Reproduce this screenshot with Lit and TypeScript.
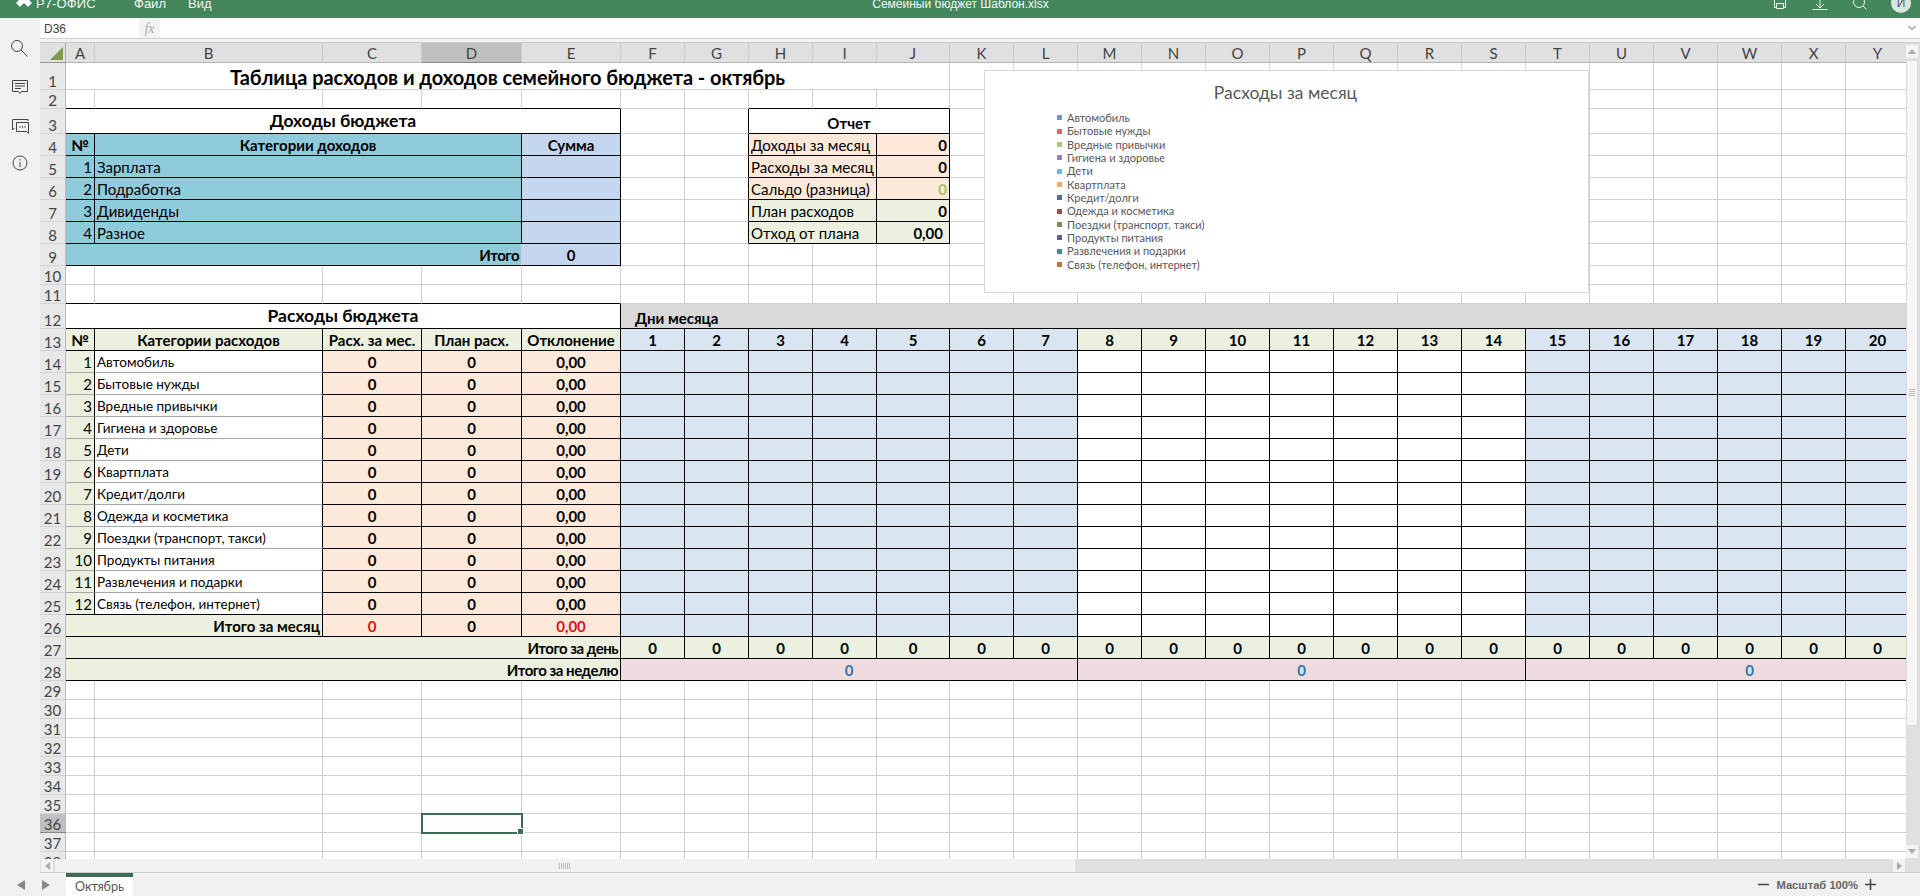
import { LitElement, html, css, svg } from 'lit';
import { customElement } from 'lit/decorators.js';

interface Cell {
  t: string;
  cls: string;
  span: number;
}

const c = (t: string, cls = '', span = 1): Cell => ({ t, cls, span });
const blank = (n: number, cls = ''): Cell[] => Array.from({ length: n }, () => c('', cls));

const LETTERS = 'ABCDEFGHIJKLMNOPQRSTUVWXYZ'.split('');

const INCOME = ['Зарплата', 'Подработка', 'Дивиденды', 'Разное'];
const CATEGORIES = [
  'Автомобиль',
  'Бытовые нужды',
  'Вредные привычки',
  'Гигиена и здоровье',
  'Дети',
  'Квартплата',
  'Кредит/долги',
  'Одежда и косметика',
  'Поездки (транспорт, такси)',
  'Продукты питания',
  'Развлечения и подарки',
  'Связь (телефон, интернет)',
];
const LEGEND = ['#4f81bd', '#c0504d', '#9bbb59', '#8064a2', '#4bacc6', '#f79646', '#2c4d75', '#772c2a', '#5f7530', '#4d3b62', '#276a7c', '#b65708'];

const report = (label: string, value: string, bg: string, extra = ''): Cell[] => [
  c(''),
  c('', 'kr'),
  c(label, `${bg} kr kb lg`, 2),
  c(value, `${bg} kr kb right b lg ${extra}`),
  ...blank(16),
];

const days = (fn: (d: number) => string): Cell[] =>
  Array.from({ length: 21 }, (_, i) => c('', `${fn(i + 1)} kr kb`));

const weekBg = (d: number) => (d <= 7 || d > 14 ? 'blue' : '');

function buildRows(): Cell[][] {
  const rows: Cell[][] = [];
  rows.push([c('Таблица расходов и доходов семейного бюджета - октябрь', 'title center', 10), ...blank(16)]);
  rows.push([...blank(5, 'kb'), ...blank(2), ...blank(3, 'kb'), ...blank(16)]);
  rows.push([
    c('Доходы бюджета', 'h2 center kr kb', 5),
    c(''),
    c('', 'kr'),
    c('Отчет', 'b lg center kr kb', 3),
    ...blank(16),
  ]);
  rows.push([
    c('№', 'sea b lg center kr kb'),
    c('Категории доходов', 'sea b lg center kr kb', 3),
    c('Сумма', 'sky b lg center kr kb'),
    ...report('Доходы за месяц', '0', 'peach'),
  ]);
  INCOME.forEach((name, i) => {
    const rep = [
      report('Расходы за месяц', '0', 'peach'),
      report('Сальдо (разница)', '0', 'peach', 'lime'),
      report('План расходов', '0', 'green'),
      report('Отход от плана', '0,00', 'green', 'pr'),
    ][i];
    rows.push([
      c(String(i + 1), 'sea lg right kr kb'),
      c(name, 'sea lg kr kb', 3),
      c('', 'sky kr kb'),
      ...rep,
    ]);
  });
  rows.push([c('Итого', 'sea b tight right kb', 4), c('0', 'sky b lg center kr kb'), ...blank(21)]);
  rows.push(blank(26));
  rows.push([...blank(5, 'kb'), ...blank(21)]);
  rows.push([c('Расходы бюджета', 'h2 center kr kb', 5), c('Дни месяца', 'band kb', 21)]);
  rows.push([
    c('№', 'green b lg center kr kb'),
    c('Категории расходов', 'green b center kr kb'),
    c('Расх. за мес.', 'green b center kr kb'),
    c('План расх.', 'green b center kr kb'),
    c('Отклонение', 'green b center kr kb'),
    ...Array.from({ length: 21 }, (_, i) => c(String(i + 1), `${i >= 7 && i < 14 ? 'green' : 'blue'} b center kr kb`)),
  ]);
  CATEGORIES.forEach((name, i) => {
    const last = i === CATEGORIES.length - 1;
    const line = last ? 'kb' : 'mb';
    rows.push([
      c(String(i + 1), `green lg right kr ${line}`),
      c(name, `name kr ${line}`),
      c('0', 'peach b center kr kb'),
      c('0', 'peach b center kr kb'),
      c('0,00', 'peach b center kr kb'),
      ...days(weekBg),
    ]);
  });
  rows.push([
    c('Итого за месяц', 'green b right kr kb', 2),
    c('0', 'peach b center red kr kb'),
    c('0', 'peach b center kr kb'),
    c('0,00', 'peach b center red kr kb'),
    ...days(weekBg),
  ]);
  rows.push([
    c('Итого за день', 'green b right tight kr kb', 5),
    ...Array.from({ length: 21 }, () => c('0', 'green b center kr kb')),
  ]);
  rows.push([
    c('Итого за неделю', 'green b right tight kr kb', 5),
    c('0', 'pink b center link kr kb', 7),
    c('0', 'pink b center link kr kb', 7),
    c('0', 'pink b center link kr kb', 7),
  ]);
  for (let r = 29; r <= 38; r++) {
    if (r === 36) {
      rows.push([...blank(3), c('', 'sel'), ...blank(22)]);
    } else {
      rows.push(blank(26));
    }
  }
  return rows;
}

const ROWS = buildRows();

const iconSearch = svg`<circle cx="9" cy="9" r="5.5"/><path d="M13 13l6.5 6.5"/>`;
const iconComment = svg`<path d="M4.5 5.5h15v11h-6l-1.5 2-1.5-2h-6z"/><path d="M7 8.5h10M7 11h10M7 13.5h6"/>`;
const iconChat = svg`<path d="M11 6.5H20V8M4.5 6.5H11M4.5 6.5V17L6.5 15"/><path d="M8.5 9.5h12v11l-2-2h-10z"/><path d="M11.5 14h1M14 14h1M16.5 14h1" stroke-width="1.5"/>`;
const iconInfo = svg`<circle cx="12" cy="12" r="7"/><path d="M12 11v5M12 8v1.5"/>`;

@customElement('app-root')
export class AppRoot extends LitElement {
  static styles = css`
    :host {
      display: block;
      width: 1920px;
      height: 896px;
      overflow: hidden;
      font-family: 'Liberation Sans', Arial, sans-serif;
      background: #f1f1f1;
    }
    .app {
      display: flex;
      flex-direction: column;
      height: 896px;
    }

    .topbar {
      position: relative;
      flex: 0 0 18px;
      background: #44875c;
      color: #fff;
      display: flex;
      align-items: flex-start;
      overflow: hidden;
      font-size: 13px;
      line-height: 8px;
    }
    .logo {
      display: flex;
      margin-left: 15px;
      width: 119px;
      gap: 3px;
    }
    .logo span {
      font-size: 13px;
      letter-spacing: 0.1px;
      opacity: 0.92;
    }
    .menu {
      width: 54px;
      opacity: 0.95;
    }
    .doc {
      position: absolute;
      left: 0;
      right: 0;
      top: 0;
      text-align: center;
      font-size: 12px;
      opacity: 0.95;
      margin-left: 1px;
    }
    .top-icons {
      margin-left: auto;
      display: flex;
      align-items: flex-start;
      gap: 20px;
      margin-right: 9px;
    }
    .top-icons svg {
      display: block;
      width: 20px;
      height: 14px;
      fill: none;
      stroke: #fff;
      stroke-width: 1;
      opacity: 0.9;
    }
    .avatar {
      width: 20px;
      height: 20px;
      margin-top: -7px;
      margin-left: 1px;
      border-radius: 50%;
      background: #d6e8dc;
      color: #555;
      font-size: 12px;
      line-height: 20px;
      text-align: center;
    }

    .main {
      flex: 1;
      display: flex;
      min-height: 0;
    }
    .side {
      flex: 0 0 40px;
      display: flex;
      flex-direction: column;
      align-items: center;
      gap: 14px;
      padding-top: 19px;
      box-sizing: border-box;
    }
    .side svg {
      display: block;
      width: 24px;
      height: 24px;
      fill: none;
      stroke: #444;
      stroke-width: 1;
    }
    .work {
      flex: 1;
      min-width: 0;
      display: flex;
      flex-direction: column;
    }

    .formula {
      flex: 0 0 25px;
      box-sizing: border-box;
      border-bottom: 1px solid #ccc;
      display: flex;
      flex-direction: column;
    }
    .formula-row {
      flex: 0 0 21px;
      box-sizing: border-box;
      background: #fff;
      display: flex;
      align-items: center;
      font-size: 12px;
      color: #444;
      border-bottom: 1px solid #d0d0d0;
    }
    .name-box {
      width: 95px;
      padding-left: 4px;
      padding-top: 2px;
    }
    .fx {
      width: 21px;
      height: 20px;
      background: #f3f3f3;
      color: #aaa;
      font: italic 14px 'Liberation Serif', serif;
      line-height: 22px;
      text-align: center;
    }
    .chev {
      margin-left: auto;
      width: 8px;
      height: 4px;
      margin-right: 4px;
      fill: none;
      stroke: #555;
    }

    .sheet-row {
      flex: 1;
      min-height: 0;
      display: flex;
    }
    .sheet {
      position: relative;
      flex: 1;
      min-width: 0;
      overflow: hidden;
      background: #fff;
    }
    .grid {
      display: grid;
      grid-template-columns: 26px 29px 228px 99px 100px 99px repeat(4, 64px) 73px repeat(16, 64px);
      grid-template-rows: 20px 27px 19px 25px repeat(6, 22px) 19px 19px 25px repeat(16, 22px) repeat(10, 19px);
      width: max-content;
      font-family: Lato, 'Open Sans', sans-serif;
      color: #000;
    }
    .corner {
      position: relative;
      background: #e0e0e0;
      border-right: 1px solid #aaa;
      border-bottom: 1px solid #999;
      box-sizing: border-box;
    }
    .corner::after {
      content: '';
      position: absolute;
      right: 2px;
      bottom: 2px;
      width: 0;
      height: 0;
      border-left: 13px solid transparent;
      border-bottom: 13px solid #7f9a4c;
    }
    .ch {
      background: #e0e0e0;
      border-right: 1px solid #cacaca;
      border-bottom: 1px solid #b5b5b5;
      box-sizing: border-box;
      color: #444;
      font-size: 15px;
      line-height: 20px;
      text-align: center;
    }
    .ch.on {
      background: #c0c0c0;
      border-bottom-color: #888;
    }
    .rh {
      background: #e8e8e8;
      border-right: 1px solid #bbb;
      border-bottom: 1px solid #d4d4d4;
      box-sizing: border-box;
      color: #444;
      font-size: 15px;
      line-height: 16px;
      display: flex;
      align-items: flex-end;
      justify-content: center;
    }
    .rh.on {
      background: #c0c0c0;
      border-bottom-color: #888;
    }
    .cell {
      position: relative;
      box-sizing: border-box;
      border-right: 1px solid #d0d0d0;
      border-bottom: 1px solid #d0d0d0;
      padding: 0 2px;
      display: flex;
      align-items: flex-end;
      overflow: hidden;
      white-space: nowrap;
      font-size: 14px;
      line-height: 19px;
    }
    .center {
      justify-content: center;
    }
    .right {
      justify-content: flex-end;
    }
    .b {
      font-size: 15px;
      font-weight: 700;
    }
    .lg {
      font-size: 15px;
    }
    .name {
      font-size: 13.5px;
    }
    .tight {
      letter-spacing: -0.5px;
    }
    .title {
      font-size: 20px;
      font-weight: 700;
      line-height: 24px;
      letter-spacing: -0.05px;
    }
    .h2 {
      font-size: 17.5px;
      font-weight: 700;
      line-height: 24px;
    }
    .kr {
      border-right-color: #000;
    }
    .kb {
      border-bottom-color: #000;
    }
    .mb {
      border-bottom-color: #a8a8a8;
    }
    .sea {
      background: #90cbdc;
    }
    .sky {
      background: #c5d7ee;
    }
    .peach {
      background: #fde9da;
    }
    .green {
      background: #ebf1de;
    }
    .blue {
      background: #d9e5f1;
    }
    .pink {
      background: #f0dbde;
    }
    .band {
      background: #d9d9d9;
      border-right: none;
      padding-left: 14px;
      font-weight: 700;
      font-size: 15px;
    }
    .red {
      color: #d8121c;
    }
    .lime {
      color: #a4c263;
    }
    .link {
      color: #2e75b6;
    }
    .pr {
      padding-right: 6px;
    }
    .sel {
      overflow: visible;
      z-index: 2;
    }
    .sel::before {
      content: '';
      position: absolute;
      left: -1px;
      top: -1px;
      width: 102px;
      height: 21px;
      box-sizing: border-box;
      border: 2px solid #3f6b55;
    }
    .sel::after {
      content: '';
      position: absolute;
      right: -3px;
      bottom: -3px;
      width: 5px;
      height: 5px;
      background: #3f6b55;
      border: 1px solid #fff;
    }

    .chart {
      position: absolute;
      left: 944px;
      top: 27px;
      width: 605px;
      height: 223px;
      box-sizing: border-box;
      background: #fff;
      border: 1px solid #d9d9d9;
      font-family: Lato, 'Open Sans', sans-serif;
      color: #595959;
      z-index: 1;
    }
    .chart h3 {
      margin: 11px 0 0;
      padding-right: 2px;
      font-size: 17.5px;
      font-weight: 400;
      line-height: 22px;
      text-align: center;
    }
    .legend {
      margin: 7px 0 0 72px;
      display: flex;
      flex-direction: column;
      font-size: 11px;
      line-height: 13.35px;
    }
    .legend div {
      display: flex;
      align-items: center;
      gap: 5px;
      white-space: nowrap;
    }
    .legend i {
      width: 5px;
      height: 5px;
      opacity: 0.82;
    }

    .vbar {
      flex: 0 0 14px;
      background: #e0e0e0;
      display: flex;
      flex-direction: column;
      align-items: stretch;
      padding: 2px 2px 1px 0;
      box-sizing: border-box;
    }
    .vbtn {
      flex: 0 0 13px;
      background: #f3f3f3;
      display: flex;
      align-items: center;
      justify-content: center;
    }
    .vthumb {
      flex: 0 0 666px;
      margin-top: 2px;
      background: #f6f6f6;
      border: 1px solid #d8d8d8;
      box-sizing: border-box;
      display: flex;
      align-items: center;
      justify-content: center;
    }
    .vgrip {
      width: 6px;
      height: 8px;
      background: repeating-linear-gradient(180deg, #bbb 0 1px, transparent 1px 2px);
    }
    .spacer {
      flex: 1;
    }
    .tri-up {
      border: 4px solid transparent;
      border-top: none;
      border-bottom: 5px solid #aaa;
    }
    .tri-down {
      border: 4px solid transparent;
      border-bottom: none;
      border-top: 5px solid #aaa;
    }
    .tri-left {
      border: 4px solid transparent;
      border-left: none;
      border-right: 5px solid #aaa;
    }
    .tri-right {
      border: 4px solid transparent;
      border-right: none;
      border-left: 5px solid #aaa;
    }

    .hbar {
      flex: 0 0 14px;
      background: #e0e0e0;
      display: flex;
      align-items: stretch;
      border-bottom: 1px solid #ccc;
      box-sizing: border-box;
      padding-left: 1px;
    }
    .hbtn {
      flex: 0 0 12px;
      background: #f3f3f3;
      display: flex;
      align-items: center;
      justify-content: center;
    }
    .hthumb {
      flex: 0 0 1020px;
      margin-left: 2px;
      background: #f2f2f2;
      display: flex;
      align-items: center;
      justify-content: center;
    }
    .hgrip {
      width: 12px;
      height: 6px;
      background: repeating-linear-gradient(90deg, #bbb 0 1px, transparent 1px 2px);
    }
    .hbar .hbtn.end {
      margin-left: auto;
      margin-right: 15px;
    }

    .tabs {
      flex: 0 0 23px;
      background: #f1f1f1;
      display: flex;
      align-items: stretch;
      color: #555;
      font-size: 12px;
    }
    .nav {
      flex: 0 0 66px;
      display: flex;
      align-items: center;
      gap: 17px;
      padding-left: 17px;
      box-sizing: border-box;
    }
    .nav .tri-left {
      border-width: 5px 8px 5px 0;
      border-right-color: #888;
    }
    .nav .tri-right {
      border-width: 5px 0 5px 8px;
      border-left-color: #888;
    }
    .tab {
      width: 67px;
      box-sizing: border-box;
      background: #fff;
      border-top: 4px solid #3f6b55;
      text-align: center;
      line-height: 19px;
      font-family: Lato, 'Open Sans', sans-serif;
      font-size: 12.5px;
    }
    .zoom {
      margin-left: auto;
      display: flex;
      align-items: center;
      margin-right: 44px;
      gap: 7px;
      font-weight: 700;
      color: #666;
      font-size: 11.2px;
    }
    .zoom svg {
      display: block;
      width: 11px;
      height: 11px;
      stroke: #444;
      stroke-width: 1.5;
    }
  `;

  render() {
    return html`
      <div class="app">
        <div class="topbar">
          <div class="logo">
            <svg width="18" height="8" viewBox="0 0 18 8" fill="#fff">
              <path d="M5 -1l4 4-4 4-4-4zM13 -1l4 4-4 4-4-4zM9 -5l4 4-4 4-4-4z" />
            </svg>
            <span>Р7-ОФИС</span>
          </div>
          <div class="menu">Файл</div>
          <div class="menu">Вид</div>
          <div class="doc">Семейный бюджет Шаблон.xlsx</div>
          <div class="top-icons">
            <svg viewBox="0 0 20 14"><path d="M4.5 0v7.5h2M15.5 0v7.5h-2M6.5 3.5h7v5h-7z" /></svg>
            <svg viewBox="0 0 20 14"><path d="M10 0v7M6 4l4 4 4-4M2.5 9.5h15" /></svg>
            <svg viewBox="0 0 20 14"><circle cx="9" cy="2" r="5.5" /><path d="M13 6l3.5 3.5" /></svg>
            <div class="avatar">И</div>
          </div>
        </div>
        <div class="main">
          <div class="side">
            <svg viewBox="0 0 24 24">${iconSearch}</svg>
            <svg viewBox="0 0 24 24">${iconComment}</svg>
            <svg viewBox="0 0 24 24">${iconChat}</svg>
            <svg viewBox="0 0 24 24">${iconInfo}</svg>
          </div>
          <div class="work">
            <div class="formula">
              <div class="formula-row">
                <div class="name-box">D36</div>
                <div class="fx">fx</div>
                <svg class="chev" viewBox="0 0 8 4"><path d="M0.5 0l3.5 3.5L7.5 0" /></svg>
              </div>
            </div>
            <div class="sheet-row">
              <div class="sheet">
                <div class="grid">
                  <div class="corner"></div>
                  ${LETTERS.map((l) => html`<div class="ch ${l === 'D' ? 'on' : ''}">${l}</div>`)}
                  ${ROWS.map(
                    (row, i) => html`
                      <div class="rh ${i === 35 ? 'on' : ''}">${i + 1}</div>
                      ${row.map(
                        (cell) =>
                          html`<div class="cell ${cell.cls}" style=${cell.span > 1 ? `grid-column: span ${cell.span}` : ''}>${cell.t}</div>`,
                      )}
                    `,
                  )}
                </div>
                <div class="chart">
                  <h3>Расходы за месяц</h3>
                  <div class="legend">
                    ${CATEGORIES.map(
                      (name, i) => html`<div><i style="background: ${LEGEND[i]}"></i>${name}</div>`,
                    )}
                  </div>
                </div>
              </div>
              <div class="vbar">
                <div class="vbtn"><div class="tri-up"></div></div>
                <div class="vthumb"><div class="vgrip"></div></div>
                <div class="spacer"></div>
                <div class="vbtn"><div class="tri-down"></div></div>
              </div>
            </div>
            <div class="hbar">
              <div class="hbtn"><div class="tri-left"></div></div>
              <div class="hthumb"><div class="hgrip"></div></div>
              <div class="hbtn end"><div class="tri-right"></div></div>
            </div>
          </div>
        </div>
        <div class="tabs">
          <div class="nav"><div class="tri-left"></div><div class="tri-right"></div></div>
          <div class="tab">Октябрь</div>
          <div class="zoom">
            <svg viewBox="0 0 11 11"><path d="M0 5.5h11" /></svg>
            <span>Масштаб 100%</span>
            <svg viewBox="0 0 11 11"><path d="M0 5.5h11M5.5 0v11" /></svg>
          </div>
        </div>
      </div>
    `;
  }
}
